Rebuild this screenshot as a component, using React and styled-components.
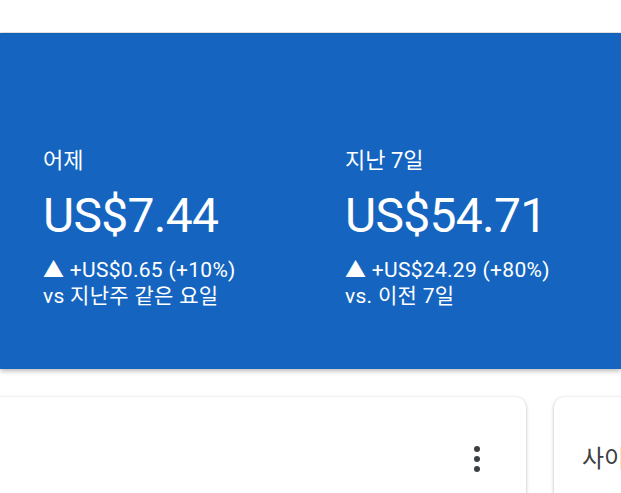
import React from "react"
import styled, { createGlobalStyle } from "styled-components"

const GlobalStyle = createGlobalStyle`
  html, body {
    margin: 0;
    padding: 0;
    background: #ffffff;
    overflow: hidden;
  }
  body {
    font-family: Roboto, "Noto Sans CJK KR", sans-serif;
  }
`

const stats = [
  {
    label: "어제",
    value: "US$7.44",
    change: "+US$0.65 (+10%)",
    compare: "vs 지난주 같은 요일",
  },
  {
    label: "지난 7일",
    value: "US$54.71",
    change: "+US$24.29 (+80%)",
    compare: "vs. 이전 7일",
  },
]

const Page = styled.div`
  width: 621px;
  height: 493px;
  overflow: hidden;
  background: #fff;
`

const TopBar = styled.header`
  height: 32px;
  background: #fff;
  box-shadow: 0 1px 2px rgba(0, 0, 0, 0.12);
  position: relative;
  z-index: 2;
`

const Hero = styled.section`
  margin-top: 1px;
  height: 336px;
  box-sizing: border-box;
  padding: 114px 0 0 43px;
  background: #1565c0;
  color: #fff;
  display: grid;
  grid-template-columns: 302px 1fr;
  align-items: start;
  box-shadow: 0 2px 5px rgba(0, 0, 0, 0.28);
  position: relative;
  z-index: 1;
`

const Stat = styled.div`
  display: flex;
  flex-direction: column;
`

const Label = styled.div`
  font-size: 22px;
  line-height: 28px;
`

const Value = styled.div`
  font-size: 48px;
  line-height: 56px;
  margin-top: 13px;
  letter-spacing: -0.7px;
`

const Change = styled.div`
  font-size: 21px;
  line-height: 24px;
  margin-top: 14px;
  letter-spacing: 0.3px;
`

const Compare = styled.div`
  font-size: 21px;
  line-height: 24px;
  margin-top: 2px;
  letter-spacing: 0.3px;
`

const Cards = styled.div`
  display: flex;
  gap: 28px;
  margin-left: -40px;
  padding-top: 28px;
`

const Card = styled.div`
  flex: 0 0 ${p => p.$width}px;
  height: 140px;
  box-sizing: border-box;
  border-radius: 10px;
  background: #fff;
  box-shadow: 0 1px 3px rgba(60, 64, 67, 0.3), 0 1px 4px rgba(60, 64, 67, 0.12);
  display: flex;
  align-items: flex-start;
  justify-content: ${p => (p.$end ? "flex-end" : "flex-start")};
  padding: 36px 25px 0 28px;
  overflow: hidden;
`

const MenuButton = styled.button`
  width: 48px;
  height: 48px;
  border: 0;
  padding: 0;
  background: transparent;
  display: flex;
  align-items: center;
  justify-content: center;
  margin-top: 2px;
`

const CardTitle = styled.h2`
  margin: 10px 0 0;
  font-family: "Noto Sans CJK KR", sans-serif;
  font-weight: 400;
  font-size: 24px;
  line-height: 28px;
  color: #3c4043;
  white-space: nowrap;
`

const Kebab = () => (
  <svg width="24" height="28" viewBox="0 0 24 28">
    <circle cx="12" cy="4" r="3" fill="#3c4043" />
    <circle cx="12" cy="14" r="3" fill="#3c4043" />
    <circle cx="12" cy="24" r="3" fill="#3c4043" />
  </svg>
)

export default function App() {
  return (
    <Page>
      <GlobalStyle />
      <TopBar />
      <Hero>
        {stats.map(s => (
          <Stat key={s.label}>
            <Label>{s.label}</Label>
            <Value>{s.value}</Value>
            <Change>▲ {s.change}</Change>
            <Compare>{s.compare}</Compare>
          </Stat>
        ))}
      </Hero>
      <Cards>
        <Card $width={566} $end>
          <MenuButton aria-label="더보기">
            <Kebab />
          </MenuButton>
        </Card>
        <Card $width={300}>
          <CardTitle>사이트 통계</CardTitle>
        </Card>
      </Cards>
    </Page>
  )
}
